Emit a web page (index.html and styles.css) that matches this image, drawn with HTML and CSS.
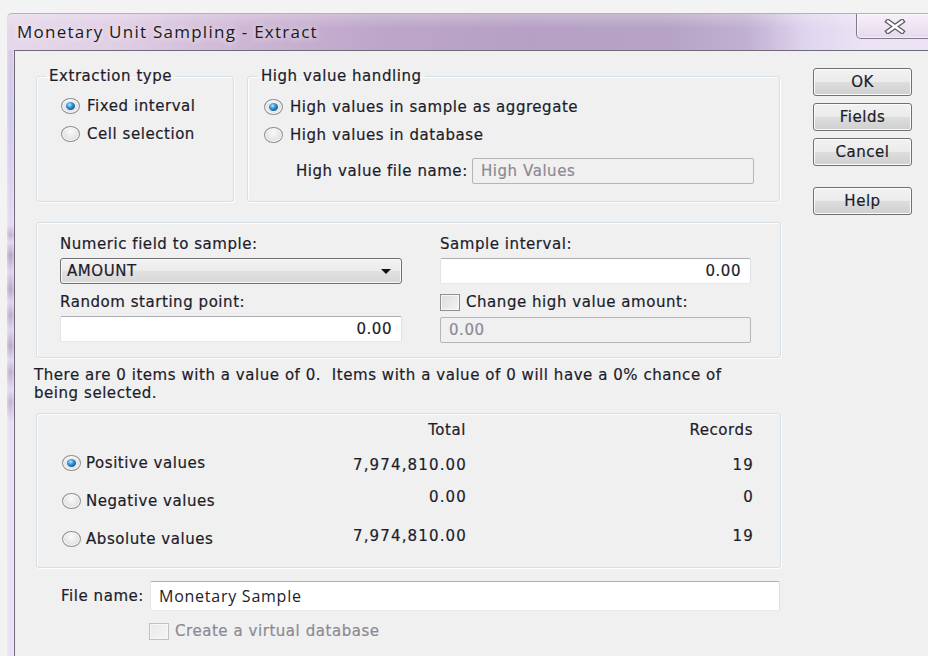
FILE: index.html
```html
<!DOCTYPE html>
<html lang="en">
<head>
<meta charset="utf-8">
<title>Monetary Unit Sampling - Extract</title>
<link rel="stylesheet" href="styles.css">
</head>
<body>
<div class="desk">
  <div class="window">
    <div class="titlebar">
      <span class="title">Monetary Unit Sampling - Extract</span>
      <button class="close" type="button" aria-label="Close">
        <svg width="22" height="15" viewBox="0 0 22 15">
          <path d="M4 2.5 L18 12.5 M18 2.5 L4 12.5" stroke="#5c5c66" stroke-width="5.2" stroke-linecap="square"/>
          <path d="M4 2.5 L18 12.5 M18 2.5 L4 12.5" stroke="#ffffff" stroke-width="2.6" stroke-linecap="square"/>
        </svg>
      </button>
    </div>
    <div class="frame">
      <div class="frame-edge"></div>
      <div class="client">

        <div class="top-row">
          <fieldset class="group g-extract">
            <legend>Extraction type</legend>
            <div class="g-body">
              <div class="radio-row"><span class="radio checked"></span>Fixed interval</div>
              <div class="radio-row"><span class="radio"></span>Cell selection</div>
            </div>
          </fieldset>

          <fieldset class="group g-high">
            <legend>High value handling</legend>
            <div class="g-body">
              <div class="radio-row"><span class="radio checked"></span>High values in sample as aggregate</div>
              <div class="radio-row"><span class="radio"></span>High values in database</div>
              <div class="hv-file">
                <span>High value file name:</span>
                <div class="textbox disabled">High Values</div>
              </div>
            </div>
          </fieldset>

          <div class="buttons">
            <button class="btn" type="button">OK</button>
            <button class="btn" type="button">Fields</button>
            <button class="btn" type="button">Cancel</button>
            <button class="btn btn-help" type="button">Help</button>
          </div>
        </div>

        <div class="group params">
          <div class="field">
            <span class="lbl">Numeric field to sample:</span>
            <div class="combo"><span>AMOUNT</span><span class="arrow"></span></div>
          </div>
          <div class="field">
            <span class="lbl">Sample interval:</span>
            <div class="textbox num">0.00</div>
          </div>
          <div class="field">
            <span class="lbl">Random starting point:</span>
            <div class="textbox num">0.00</div>
          </div>
          <div class="field">
            <span class="lbl check-lbl"><span class="checkbox"></span>Change high value amount:</span>
            <div class="textbox disabled tb2">0.00</div>
          </div>
        </div>

        <p class="info">There are 0 items with a value of 0.&nbsp; Items with a value of 0 will have a 0% chance of being selected.</p>

        <div class="group results">
          <span></span>
          <span class="hd num-col">Total</span>
          <span class="hd num-col">Records</span>

          <div class="radio-row r-label r1"><span class="radio checked"></span>Positive values</div>
          <span class="num-col val v1">7,974,810.00</span>
          <span class="num-col val v1">19</span>

          <div class="radio-row r-label r2"><span class="radio"></span>Negative values</div>
          <span class="num-col val v2">0.00</span>
          <span class="num-col val v2">0</span>

          <div class="radio-row r-label r3"><span class="radio"></span>Absolute values</div>
          <span class="num-col val v3">7,974,810.00</span>
          <span class="num-col val v3">19</span>
        </div>

        <div class="file-row">
          <span>File name:</span>
          <div class="textbox file-box">Monetary Sample</div>
        </div>
        <div class="virtual-row">
          <span class="checkbox disabled-box"></span><span class="muted">Create a virtual database</span>
        </div>

      </div>
    </div>
  </div>
</div>
</body>
</html>
```

FILE: styles.css
```css
* { box-sizing: border-box; }

html, body {
  margin: 0;
  padding: 0;
  background: #f3f3f3;
}

body {
  font-family: "DejaVu Sans", "Liberation Sans", sans-serif;
  font-size: 15px;
  line-height: 18px;
  letter-spacing: 0.55px;
  color: #1c1c2a;
  -webkit-text-stroke: 0.2px currentColor;
}

.desk {
  width: 928px;
  height: 656px;
  overflow: hidden;
  padding-top: 13px;
  padding-left: 7px;
  background: #f3f3f3;
}

.window {
  width: 927px;
  height: 643px;
  display: flex;
  flex-direction: column;
}

/* Aero glass caption */
.titlebar {
  height: 37px;
  flex: none;
  display: flex;
  align-items: flex-start;
  border-top: 1px solid #b9aebf;
  border-top-left-radius: 5px;
  background:
    linear-gradient(180deg, rgba(255,255,255,0.25) 0, rgba(255,255,255,0) 40%),
    linear-gradient(90deg, #e6d8ea 0, #e0cee5 110px, #cbb3d3 250px, #bca5c9 380px, #b6a1c5 520px, #b6a3c6 660px, #c2b0d2 740px, #e0d5ef 800px, #ece4f5 860px);
}

.title {
  font-family: "Open Sans", "Noto Sans", sans-serif;
  font-size: 17px;
  letter-spacing: 1.25px;
  line-height: 22px;
  margin-top: 7px;
  padding-left: 10px;
  color: #1a1a1a;
  -webkit-text-stroke: 0;
  text-shadow: 0 0 6px rgba(255,255,255,0.8), 0 0 12px rgba(255,255,255,0.5);
}

.close {
  margin-left: auto;
  width: 78px;
  height: 25px;
  padding: 0;
  display: flex;
  align-items: center;
  justify-content: center;
  border: 1px solid #7f7888;
  border-top: none;
  border-radius: 0 0 5px 5px;
  background: linear-gradient(180deg, #f6eff9 0, #efe5f4 50%, #e6daee 100%);
  box-shadow: inset 0 0 0 1px rgba(255,255,255,0.6);
}

.frame {
  flex: 1;
  display: flex;
}

.frame-edge {
  width: 7px;
  flex: none;
  background:
    linear-gradient(90deg, rgba(255,255,255,0.35), rgba(255,255,255,0) 40%, rgba(255,255,255,0) 60%, rgba(255,255,255,0.3)),
    linear-gradient(180deg, #d9c9e6 0, #cfc8ee 60px, #dcd0f0 130px, #e4d8f2 175px,
      #c6b3d3 185px, #e2d6f0 192px, #b9a6c8 205px, #dfd2ee 222px, #bba8ca 240px, #e0d3ef 252px,
      #bfaccd 265px, #e0d3ef 280px, #bca9ca 296px, #e2d6f0 310px, #c2afd0 322px, #e3d8f1 340px,
      #c6b4d3 352px, #e8ddf5 372px, #eadff7 100%);
}

.client {
  flex: 1;
  border-top: 1px solid #6e6a78;
  border-left: 1px solid #6e6a78;
  background: #f0f0f0;
  padding: 16px 0 0 21px;
}

/* group boxes */
.group {
  margin: 0;
  border: 1px solid #d5dfe5;
  border-radius: 3px;
  box-shadow: inset 1px 1px 0 #fdfdfd, 1px 1px 0 #fdfdfd;
  min-width: 0;
}

fieldset.group { padding: 0; }

legend {
  margin-left: 9px;
  padding: 0 3px;
  line-height: 18px;
}

.top-row {
  display: flex;
  align-items: stretch;
  height: 135px;
}

.g-extract { width: 198px; }
.g-extract .g-body { padding: 7px 0 0 24px; }

.g-high {
  width: 533px;
  margin-left: 13px;
}
.g-high legend { margin-left: 10px; }
.g-high .g-body { padding: 8px 0 0 16px; }

.radio-row {
  display: flex;
  align-items: center;
  height: 28px;
  gap: 7px;
  white-space: nowrap;
}

.radio {
  position: relative;
  flex: none;
  width: 19px;
  height: 16px;
  border-radius: 50%;
  border: 1px solid #8e8f91;
  background: radial-gradient(ellipse at 50% 35%, #fafafa 0, #e4e4e4 60%, #d0d0d0 100%);
  box-shadow: inset 0 0 0 1px rgba(255,255,255,0.8);
}

.radio.checked::after {
  content: "";
  position: absolute;
  left: 4px;
  top: 3px;
  width: 9px;
  height: 8px;
  border-radius: 50%;
  background: radial-gradient(ellipse at 40% 35%, #bde9ff 0, #3a9ad8 35%, #145a9e 70%, #0b3468 100%);
}

.hv-file {
  display: grid;
  grid-template-columns: 176px 282px;
  align-items: center;
  margin-top: 9px;
  padding-left: 32px;
}

.textbox {
  height: 26px;
  background: #ffffff;
  border: 1px solid;
  border-color: #abadb3 #dbdfe6 #e3e9ef #e2e3ea;
  border-radius: 2px;
  padding: 3px 8px;
  white-space: nowrap;
}

.textbox.disabled {
  background: #f0f0f0;
  border-color: #b2b6bb;
  color: #8c8993;
}

.textbox.num {
  text-align: right;
  padding-right: 9px;
}

.buttons {
  display: flex;
  flex-direction: column;
  gap: 7px;
  margin-left: 33px;
  padding-top: 1px;
}

.btn {
  flex: none;
  width: 99px;
  height: 28px;
  padding: 0;
  font: inherit;
  letter-spacing: inherit;
  color: #1c1c2a;
  border: 1px solid #707070;
  border-radius: 3px;
  background: linear-gradient(180deg, #f2f2f2 0, #ebebeb 48%, #dddddd 52%, #cfcfcf 100%);
  box-shadow: inset 0 0 0 1px #fbfbfb;
}

.btn-help { margin-top: 14px; }

/* parameters box */
.params {
  width: 745px;
  height: 136px;
  margin-top: 20px;
  padding: 12px 0 0 23px;
  display: grid;
  grid-template-columns: 342px 311px;
  column-gap: 38px;
  row-gap: 9px;
  align-content: start;
}

.field {
  display: flex;
  flex-direction: column;
  gap: 5px;
}

.lbl { line-height: 18px; white-space: nowrap; }

.check-lbl {
  display: flex;
  align-items: center;
  gap: 6px;
}

.checkbox {
  flex: none;
  width: 20px;
  height: 17px;
  border: 1px solid #8e8f91;
  background: linear-gradient(135deg, #dcdcdc 0, #f4f4f4 100%);
  box-shadow: inset 0 0 0 1px #f7f7f7;
}

.tb2 { margin-top: 1px; }

.combo {
  height: 26px;
  border: 1px solid #707070;
  border-radius: 3px;
  background: linear-gradient(180deg, #f2f2f2 0, #ebebeb 48%, #e0e0e0 52%, #d8d8d8 100%);
  box-shadow: inset 0 0 0 1px #f8f8f8;
  display: flex;
  align-items: center;
  justify-content: space-between;
  padding: 0 10px 0 6px;
}

.arrow {
  width: 0;
  height: 0;
  border-left: 5px solid transparent;
  border-right: 5px solid transparent;
  border-top: 5px solid #111;
}

.info {
  margin: 8px 0 0 -2px;
  width: 722px;
  line-height: 18px;
}

/* totals box */
.results {
  width: 745px;
  height: 155px;
  margin-top: 11px;
  padding: 7px 27px 0 25px;
  display: grid;
  grid-template-columns: 240px 164px 1fr;
  grid-template-rows: 25px 36px 37px 37px;
  align-items: center;
}

.num-col {
  text-align: right;
  white-space: nowrap;
}

.hd { align-self: start; }

.val { letter-spacing: 1.15px; margin-right: -1px; }

.r-label { height: auto; gap: 5px; }
.r1 { padding-bottom: 2px; }
.r3 { padding-top: 3px; }
.v1 { padding-top: 2px; }
.v2 { padding-bottom: 7px; }
.v3 { padding-bottom: 3px; }

.file-row {
  display: grid;
  grid-template-columns: 89px 630px;
  align-items: center;
  margin-top: 13px;
  padding-left: 25px;
}

.file-box {
  height: 30px;
  padding: 5px 8px;
  font-family: "Open Sans", "Noto Sans", sans-serif;
  font-size: 16px;
  letter-spacing: 0.75px;
  line-height: 18px;
  -webkit-text-stroke: 0;
}

.virtual-row {
  display: flex;
  align-items: center;
  gap: 6px;
  margin-top: 11px;
  padding-left: 113px;
  height: 18px;
}

.disabled-box {
  border-color: #c1c1c1;
  background: linear-gradient(135deg, #e8e8e8 0, #f6f6f6 100%);
}

.muted {
  color: #8c8993;
}
```
